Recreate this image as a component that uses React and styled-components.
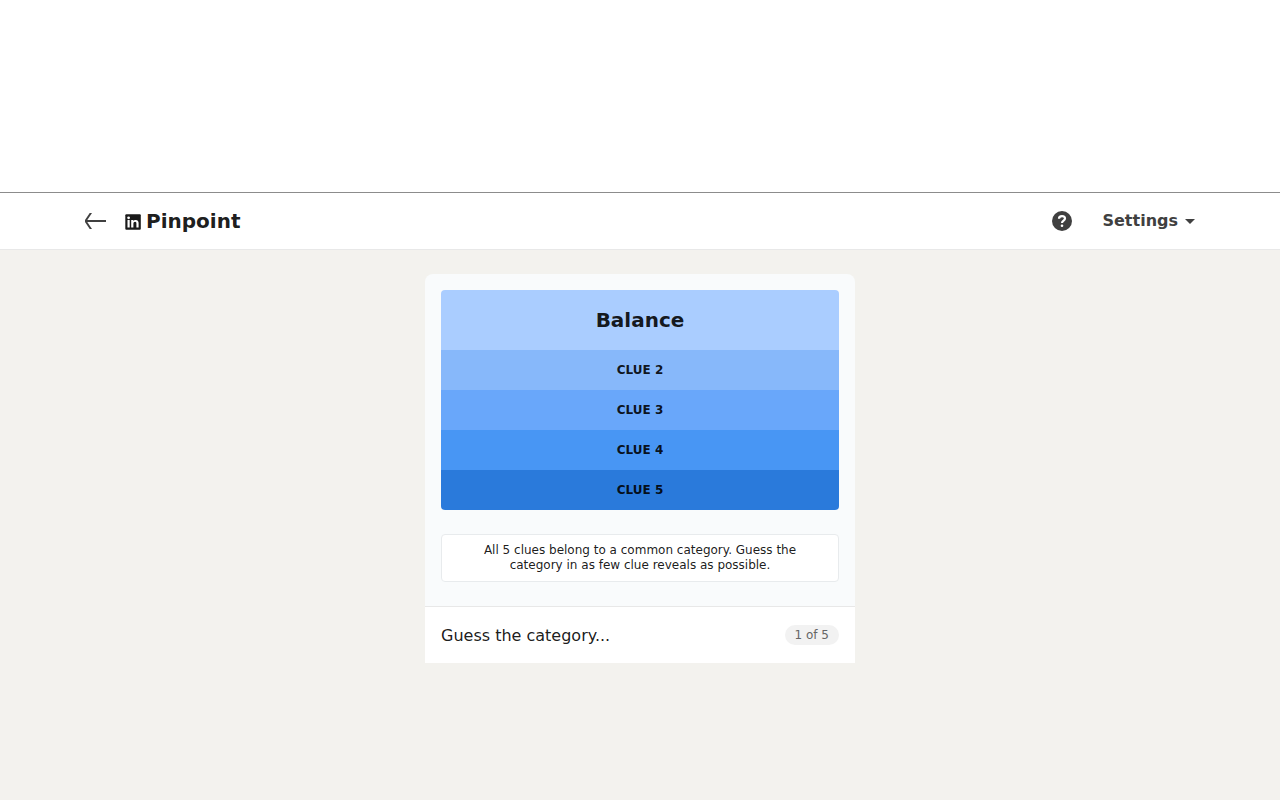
import React from "react";
import styled, { createGlobalStyle } from "styled-components";

const Global = createGlobalStyle`
  * { box-sizing: border-box; }
  body {
    margin: 0;
    min-height: 100vh;
    background: #f3f2ee;
    color: rgba(0, 0, 0, 0.9);
    font-family: "DejaVu Sans", sans-serif;
  }
  button, input { font: inherit; color: inherit; }
`;

const AdSlot = styled.div`
  height: 193px;
  background: #fff;
  border-bottom: 1px solid #8c8c8c;
`;

const TopBar = styled.header`
  height: 57px;
  background: #fff;
  border-bottom: 1px solid #e8e8e8;
`;

const BarInner = styled.div`
  max-width: 1128px;
  height: 100%;
  margin: 0 auto;
  padding: 0 6px 0 8px;
  display: flex;
  align-items: center;
  justify-content: space-between;
`;

const Group = styled.div`
  display: flex;
  align-items: center;
  gap: ${(p) => p.$gap}px;
`;

const IconButton = styled.button`
  display: flex;
  padding: 0;
  border: 0;
  background: none;
  color: #404040;
  cursor: pointer;
`;

const Brand = styled.h1`
  display: flex;
  align-items: center;
  gap: 5px;
  margin: 0;
  font-size: 20px;
  line-height: 25px;
  font-weight: 700;
`;

const SettingsButton = styled(IconButton)`
  align-items: center;
  gap: 4px;
  font-size: 16px;
  line-height: 20px;
  font-weight: 700;
`;

const Game = styled.main`
  width: 100%;
  max-width: 430px;
  margin: 24px auto;
  border-radius: 8px 8px 0 0;
  overflow: hidden;
  background: #f9fbfc;
`;

const Board = styled.div`
  padding: 16px 16px 24px;
`;

const Clues = styled.ol`
  margin: 0 0 24px;
  padding: 0;
  list-style: none;
  border-radius: 4px;
  overflow: hidden;
`;

const Clue = styled.li`
  display: flex;
  align-items: center;
  justify-content: center;
  height: ${(p) => (p.$open ? 60 : 40)}px;
  background: ${(p) => p.$color};
  font-size: ${(p) => (p.$open ? 20 : 12)}px;
  font-weight: 700;
`;

const Hint = styled.p`
  margin: 0;
  padding: 8px 24px;
  border: 1px solid #e8ebed;
  border-radius: 4px;
  background: #fff;
  font-size: 12px;
  line-height: 15px;
  text-align: center;
`;

const GuessForm = styled.form`
  display: flex;
  align-items: center;
  height: 57px;
  padding: 0 16px;
  border-top: 1px solid #e8e8e8;
  background: #fff;
`;

const GuessInput = styled.input`
  flex: 1;
  min-width: 0;
  padding: 2px 0 0;
  border: 0;
  outline: 0;
  background: none;
  font-size: 16px;
  line-height: 24px;
  &::placeholder { color: rgba(0, 0, 0, 0.9); opacity: 1; }
`;

const Counter = styled.span`
  padding: 0 10px;
  border-radius: 10px;
  background: #f2f2f2;
  color: #666;
  font-size: 12px;
  line-height: 20px;
`;

const clues = [
  { text: "Balance", color: "#aacdff", open: true },
  { text: "CLUE 2", color: "#87b8fa" },
  { text: "CLUE 3", color: "#69a7fa" },
  { text: "CLUE 4", color: "#4896f4" },
  { text: "CLUE 5", color: "#2a7adb" },
];

export default function App() {
  return (
    <>
      <Global />
      <AdSlot />
      <TopBar>
        <BarInner>
          <Group $gap={17}>
            <IconButton type="button" aria-label="Back">
              <svg width="24" height="24" viewBox="0 0 24 24" fill="currentColor">
                <path d="M22 11v2H3.300L8 20H5.700L1 13v-2L5.700 4H8L3.300 11z" />
              </svg>
            </IconButton>
            <Brand>
              <svg width="16" height="18" viewBox="0 -2 16 18" aria-hidden="true">
                <rect x="0.300" y="0.200" width="15.500" height="15.600" rx="1" fill="#1a1a1a" />
                <path d="M2.500 6.100h2.200v7.500H2.500zM6.200 6.100h2.200v1c.4-.7 1.200-1.200 2.300-1.200 2.200 0 2.900 1.300 2.900 3.200v4.500h-2.200V9.600c0-1-.3-1.800-1.300-1.800-1.100 0-1.700.8-1.700 1.900v3.900H6.200z" fill="#fff" />
                <circle cx="3.600" cy="3.800" r="1.400" fill="#fff" />
              </svg>
              Pinpoint
            </Brand>
          </Group>
          <Group $gap={28}>
            <IconButton type="button" aria-label="How to play">
              <svg width="24" height="24" viewBox="0 0 24 24" fill="currentColor">
                <circle cx="12" cy="12" r="10" />
                <path d="M9 9.700C9 7.900 10.200 7.100 12 7.100s3 .8 3 2.400c0 2.100-3 2.100-3 4.500" fill="none" stroke="#fff" strokeWidth="2.200" />
                <circle cx="12" cy="16.800" r="1.300" fill="#fff" />
              </svg>
            </IconButton>
            <SettingsButton type="button">
              Settings
              <svg width="16" height="16" viewBox="0 0 16 16" fill="currentColor" aria-hidden="true">
                <path d="M3 6h10l-5 5z" />
              </svg>
            </SettingsButton>
          </Group>
        </BarInner>
      </TopBar>
      <Game>
        <Board>
          <Clues>
            {clues.map((clue) => (
              <Clue key={clue.text} $color={clue.color} $open={clue.open}>{clue.text}</Clue>
            ))}
          </Clues>
          <Hint>All 5 clues belong to a common category. Guess the category in as few clue reveals as possible.</Hint>
        </Board>
        <GuessForm onSubmit={(e) => e.preventDefault()}>
          <GuessInput aria-label="Guess the category" placeholder="Guess the category..." />
          <Counter>1 of 5</Counter>
        </GuessForm>
      </Game>
    </>
  );
}
